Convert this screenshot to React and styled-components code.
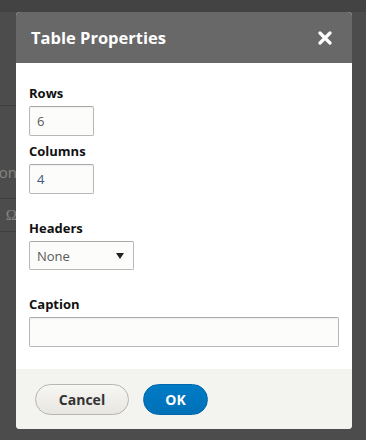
import styled, { createGlobalStyle } from 'styled-components';

const GlobalStyle = createGlobalStyle`
  html, body {
    margin: 0;
    padding: 0;
    background: #4c4c4c;
  }
  body {
    font-family: "Open Sans", "DejaVu Sans", sans-serif;
  }
`;

const Page = styled.div`
  position: relative;
  width: 366px;
  height: 440px;
  overflow: hidden;
  background: #4c4c4c;
`;

const TopStrip = styled.div`
  height: 12px;
  background: #434343;
`;

const SideRow = styled.div`
  box-sizing: border-box;
  width: 17px;
  height: ${(p) => p.h}px;
  padding-bottom: ${(p) => p.pb || 0}px;
  border-bottom: 1px solid ${(p) => p.line || 'transparent'};
  display: flex;
  align-items: ${(p) => (p.pb ? 'flex-end' : 'center')};
  justify-content: flex-end;
  color: #858585;
  font-size: 15px;
  line-height: 18px;
  white-space: nowrap;
  font-family: ${(p) => (p.serif ? '"Liberation Serif", serif' : 'inherit')};
`;

const Dialog = styled.div`
  position: absolute;
  left: 16px;
  top: 12px;
  width: 336px;
  height: 417px;
  border-radius: 4px;
  overflow: hidden;
  display: flex;
  flex-direction: column;
  background: #fff;
`;

const Header = styled.div`
  height: 51px;
  flex: none;
  background: #686868;
  display: flex;
  align-items: center;
  justify-content: space-between;
  padding: 0 19px 0 15px;
`;

const Title = styled.h1`
  margin: 0;
  color: #fff;
  font-size: 16.5px;
  font-weight: 700;
`;

const Close = styled.button`
  border: none;
  background: none;
  padding: 0;
  width: 16px;
  height: 16px;
  display: flex;
  align-items: center;
  justify-content: center;
`;

const Body = styled.div`
  flex: 1;
  padding: 21px 13px 0;
`;

const Field = styled.div`
  margin-bottom: ${(p) => p.gap}px;
`;

const Label = styled.label`
  display: block;
  font-size: 13px;
  font-weight: 700;
  line-height: 18px;
  color: #111;
  margin-bottom: 4px;
`;

const TextInput = styled.input`
  box-sizing: border-box;
  width: ${(p) => p.w};
  height: 30px;
  border: 1px solid #b8b8b8;
  border-top-color: #a9a9a9;
  border-radius: 2px;
  background: #fcfcfa;
  padding: 0 7px;
  font-family: inherit;
  font-size: 13px;
  color: ${(p) => p.tone || '#595959'};
  box-shadow: inset 0 1px 2px rgba(0, 0, 0, 0.06);
  outline: none;
  display: block;
`;

const SelectBox = styled.div`
  box-sizing: border-box;
  width: 105px;
  height: 29px;
  border: 1px solid #b8b8b8;
  border-top-color: #a9a9a9;
  border-radius: 2px;
  background: #fcfcfa;
  padding: 0 7px;
  display: flex;
  align-items: center;
  justify-content: space-between;
  font-size: 13px;
  color: #595959;
`;

const Caret = styled.span`
  width: 0;
  height: 0;
  border-left: 4.5px solid transparent;
  border-right: 4.5px solid transparent;
  border-top: 6px solid #222;
  margin-right: 2px;
`;

const Footer = styled.div`
  height: 60px;
  flex: none;
  background: #f3f3f0;
  display: flex;
  align-items: center;
  gap: 14px;
  padding: 0 19px;
`;

const Button = styled.button`
  box-sizing: border-box;
  height: 31px;
  width: ${(p) => p.w}px;
  border-radius: 20px;
  font-family: inherit;
  font-size: 14px;
  font-weight: 700;
  padding: 0;
  border: 1px solid ${(p) => (p.primary ? '#0068aa' : '#b5b5b2')};
  color: ${(p) => (p.primary ? '#fff' : '#333')};
  background: ${(p) =>
    p.primary
      ? 'linear-gradient(#007bc6, #0071b8)'
      : 'linear-gradient(#f6f6f3, #e8e6e1)'};
`;

export default function App() {
  return (
    <Page>
      <GlobalStyle />
      <TopStrip />
      <SideRow h={94} line="#404040" />
      <SideRow h={93} line="#3e3e3e" pb={17}>
        on
      </SideRow>
      <SideRow h={33} line="#3e3e3e" serif>
        Ω
      </SideRow>

      <Dialog>
        <Header>
          <Title>Table Properties</Title>
          <Close aria-label="Close">
            <svg width="14" height="14" viewBox="0 0 14 14">
              <path
                d="M2 2 L12 12 M12 2 L2 12"
                stroke="#fff"
                strokeWidth="3.2"
                strokeLinecap="round"
              />
            </svg>
          </Close>
        </Header>
        <Body>
          <Field gap={6}>
            <Label>Rows</Label>
            <TextInput w="65px" defaultValue="6" />
          </Field>
          <Field gap={25}>
            <Label>Columns</Label>
            <TextInput w="65px" defaultValue="4" tone="#3d5a80" />
          </Field>
          <Field gap={25}>
            <Label>Headers</Label>
            <SelectBox>
              <span>None</span>
              <Caret />
            </SelectBox>
          </Field>
          <Field gap={0}>
            <Label>Caption</Label>
            <TextInput w="100%" defaultValue="" />
          </Field>
        </Body>
        <Footer>
          <Button w={94}>Cancel</Button>
          <Button w={65} primary>
            OK
          </Button>
        </Footer>
      </Dialog>
    </Page>
  );
}
